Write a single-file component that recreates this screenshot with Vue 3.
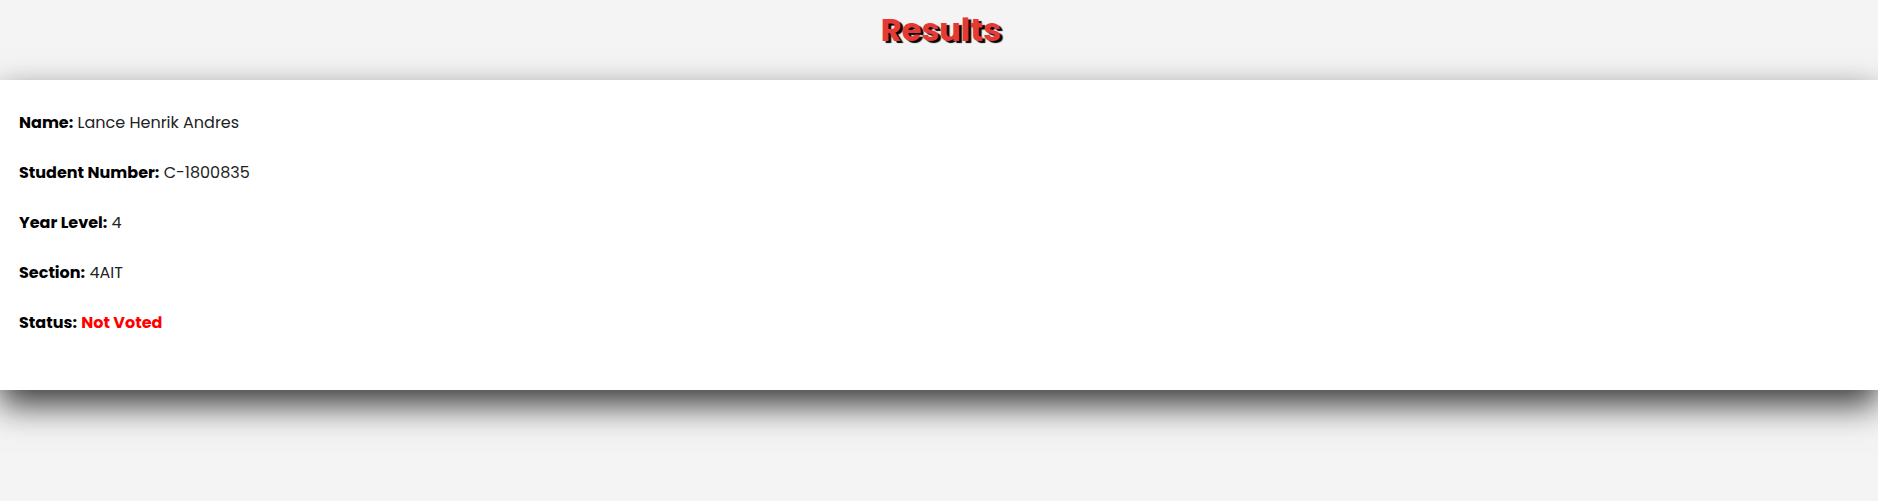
<script setup>
const details = [
  { label: 'Name', value: 'Lance Henrik Andres' },
  { label: 'Student Number', value: 'C-1800835' },
  { label: 'Year Level', value: '4' },
  { label: 'Section', value: '4AIT' },
  { label: 'Status', value: 'Not Voted', alert: true },
]
</script>

<template>
  <main class="page">
    <h1 class="title">Results</h1>
    <section class="card">
      <p v-for="item in details" :key="item.label" class="row">
        <strong>{{ item.label }}:</strong>{{ ' ' }}<span :class="item.alert ? 'alert' : 'value'">{{ item.value }}</span>
      </p>
    </section>
  </main>
</template>

<style>
body {
  margin: 0;
  background: #f4f4f4;
}
</style>

<style scoped>
.page {
  min-height: 100vh;
  font-family: Poppins, Inter, "Open Sans", sans-serif;
  font-size: 16px;
  line-height: 24px;
  color: #000;
}

.title {
  margin: 0;
  padding: 6px 0 26px 4px;
  font-size: 32px;
  line-height: 48px;
  font-weight: 700;
  text-align: center;
  color: #e53935;
  text-shadow: 3px 2px 1px #000;
}

.card {
  display: flex;
  flex-direction: column;
  gap: 26px;
  padding: 31px 19px 55px;
  background: #fff;
  box-shadow: 0 15px 32px rgba(0, 0, 0, 0.76);
}

.row {
  margin: 0;
}

.row strong {
  font-weight: 700;
}

.value {
  font-weight: 400;
  color: #222;
}

.alert {
  font-weight: 700;
  color: #f00;
}
</style>
